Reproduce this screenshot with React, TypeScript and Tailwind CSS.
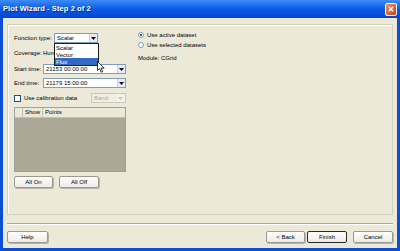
import React from 'react';

const font = { fontFamily: '"Liberation Sans", Arial, sans-serif' };

function Combo({ value, width, disabled }: { value: string; width: string; disabled?: boolean }) {
  return (
    <div
      className={`${width} h-[10px] flex items-center border ${
        disabled ? 'border-[#c9c7ba] bg-[#f0eee4] text-[#aca899]' : 'border-[#7f9db9] bg-white text-black'
      }`}
    >
      <span className="flex-1 pl-[2px] leading-none truncate">{value}</span>
      <span
        className={`w-[8px] h-[8px] mr-[0.5px] flex items-center justify-center ${
          disabled ? 'bg-[#f3f2ec]' : 'bg-[#e6ecf7] border-l border-[#c3d3ef]'
        }`}
      >
        <svg width="5" height="3" viewBox="0 0 5 3">
          <path d="M0 0h5L2.5 3z" fill={disabled ? '#c9c7ba' : '#000'} />
        </svg>
      </span>
    </div>
  );
}

function Btn({ label, width, def }: { label: string; width: string; def?: boolean }) {
  return (
    <div
      className={`${width} h-[12px] flex items-center justify-center rounded-[2px] bg-gradient-to-b from-white to-[#ecebe6] ${
        def ? 'border-[1.5px] border-[#2b2b2b]' : 'border border-[#9a9a92] shadow-[1px_1px_0_#b8b6a8]'
      } leading-none`}
    >
      {label}
    </div>
  );
}

function Radio({ checked, label }: { checked?: boolean; label: string }) {
  return (
    <div className="h-[10px] flex items-center gap-[3px]">
      <span className="w-[6px] h-[6px] rounded-full border border-[#7f9db9] bg-white flex items-center justify-center">
        {checked && <span className="w-[2px] h-[2px] rounded-full bg-[#222]" />}
      </span>
      <span className="leading-none">{label}</span>
    </div>
  );
}

export default function App() {
  return (
    <div
      className="w-[400px] h-[251px] flex flex-col bg-[#0a4fd6] text-[6px] text-black overflow-hidden"
      style={font}
    >
      {/* Title bar */}
      <div className="h-[18px] flex items-center justify-between pl-[3px] pr-[3px] bg-gradient-to-b from-[#3d8cf6] via-[#0a5ae6] to-[#0645d0]">
        <span className="text-white font-bold text-[7.5px] leading-none tracking-[0.1px] [text-shadow:1px_1px_0_#0a2a80]">
          Plot Wizard - Step 2 of 2
        </span>
        <span className="w-[12px] h-[13px] rounded-[2px] border border-white bg-gradient-to-br from-[#f08a5f] to-[#c9421c] flex items-center justify-center">
          <svg width="6" height="6" viewBox="0 0 6 6">
            <path d="M0.8 0.8L5.2 5.2M5.2 0.8L0.8 5.2" stroke="#fff" strokeWidth="1.4" />
          </svg>
        </span>
      </div>

      {/* Client */}
      <div className="flex-1 mx-[3px] mb-[3px] bg-[#ece9d8] flex flex-col px-[4px]">
        {/* Group panel */}
        <div className="relative mt-[6px] h-[191px] border border-[#d0d0bf] shadow-[inset_1px_1px_0_#fff] flex pl-[6px] pr-[4px]">
          {/* Left column */}
          <div className="w-[112px] flex flex-col">
            <div className="mt-[8px] flex items-center">
              <span className="w-[40px]">Function type:</span>
              <Combo value="Scalar" width="w-[44px]" />
            </div>
            <div className="mt-[5px] h-[10px] flex items-center">
              <span className="w-[29px]">Coverage:</span>
              <span>Hum</span>
            </div>
            <div className="mt-[6px] flex items-center">
              <span className="w-[29px]">Start time:</span>
              <Combo value="21153 00:00:00" width="w-[83px]" />
            </div>
            <div className="mt-[4px] flex items-center">
              <span className="w-[29px]">End time:</span>
              <Combo value="21179 15:00:00" width="w-[83px]" />
            </div>
            <div className="mt-[5px] flex items-center">
              <span className="w-[7px] h-[7px] border border-[#1c5180] bg-white" />
              <span className="ml-[3px] flex-1">Use calibration data</span>
              <Combo value="Band" width="w-[35px]" disabled />
            </div>
            {/* Table */}
            <div className="mt-[4px] h-[65px] border border-[#a0a0a0] bg-[#aba898] flex flex-col">
              <div className="h-[10px] flex bg-[#ece9d8] border-b border-[#c5c2b2]">
                <span className="w-[8px] border-r border-[#c5c2b2]" />
                <span className="w-[20px] pl-[2px] flex items-center border-r border-[#c5c2b2]">Show</span>
                <span className="flex-1 pl-[2px] flex items-center">Points</span>
              </div>
            </div>
            <div className="mt-[4px] flex gap-[6px]">
              <Btn label="All On" width="w-[39px]" />
              <Btn label="All Off" width="w-[40px]" />
            </div>
          </div>

          {/* Right column */}
          <div className="ml-[12px] mt-[5px] flex flex-col">
            <Radio checked label="Use active dataset" />
            <Radio label="Use selected datasets" />
            <div className="mt-[3px] h-[10px] flex items-center">
              <span className="w-[23px]">Module:</span>
              <span>CGrid</span>
            </div>
          </div>

          {/* Open dropdown list */}
          <div className="absolute left-[46px] top-[18px] w-[45px] border border-[#1c1c1c] bg-white flex flex-col">
            <span className="h-[7px] pl-[1px] flex items-center leading-none">Scalar</span>
            <span className="h-[7px] pl-[1px] flex items-center leading-none">Vector</span>
            <span className="h-[7px] pl-[1px] flex items-center leading-none bg-[#316ac5] text-white">Flux</span>
          </div>
          {/* Mouse cursor */}
          <svg className="absolute left-[89px] top-[36px]" width="9" height="12" viewBox="0 0 9 12">
            <path d="M0.5 0.5V9.5L2.6 7.6L4.2 11.2L5.6 10.6L4.1 7.1H7.2Z" fill="#fff" stroke="#000" strokeWidth="0.8" />
          </svg>
        </div>

        {/* Separator */}
        <div className="mt-[8px] border-t border-[#aca899] border-b border-b-white" />

        {/* Footer buttons */}
        <div className="mt-[6px] flex items-center">
          <Btn label="Help" width="w-[41px]" />
          <div className="flex-1" />
          <Btn label="< Back" width="w-[39px]" />
          <div className="w-[2px]" />
          <Btn label="Finish" width="w-[40px]" def />
          <div className="w-[6px]" />
          <Btn label="Cancel" width="w-[40px]" />
        </div>
      </div>
    </div>
  );
}
